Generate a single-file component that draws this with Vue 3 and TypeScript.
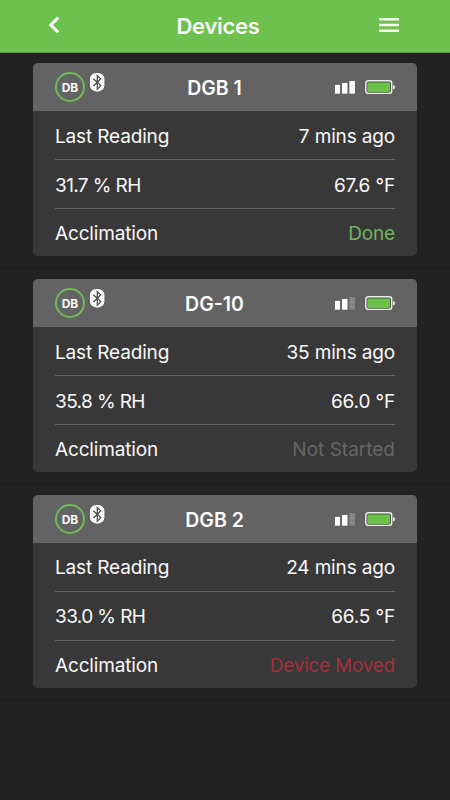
<script setup lang="ts">
interface Device {
  name: string
  reading: string
  humidity: string
  temperature: string
  status: string
  tone: 'done' | 'idle' | 'moved'
  signal: number
}

const devices: Device[] = [
  { name: 'DGB 1', reading: '7 mins ago', humidity: '31.7 % RH', temperature: '67.6 °F', status: 'Done', tone: 'done', signal: 3 },
  { name: 'DG-10', reading: '35 mins ago', humidity: '35.8 % RH', temperature: '66.0 °F', status: 'Not Started', tone: 'idle', signal: 2 },
  { name: 'DGB 2', reading: '24 mins ago', humidity: '33.0 % RH', temperature: '66.5 °F', status: 'Device Moved', tone: 'moved', signal: 2 },
]
</script>

<template>
  <div class="screen">
    <header class="topbar">
      <button class="icon-button" aria-label="Back">
        <svg width="12" height="18" viewBox="0 0 12 18"><path d="M10.2 1.6 2.8 9 10.2 16.4" fill="none" stroke="#fff" stroke-width="3" /></svg>
      </button>
      <h1>Devices</h1>
      <button class="icon-button" aria-label="Menu">
        <svg width="20" height="14" viewBox="0 0 20 14"><path d="M0 1.3h20M0 7h20M0 12.7h20" stroke="#f6fff0" stroke-width="2.5" /></svg>
      </button>
    </header>
    <main>
      <section v-for="device in devices" :key="device.name" class="slot">
        <article class="card">
          <div class="card-head">
            <div class="badges">
              <span class="ring">DB</span>
              <svg class="bluetooth" width="15" height="19" viewBox="0 0 15 19">
                <rect x="0" y="0" width="14.4" height="18.4" rx="6.2" fill="#fff" />
                <path d="M3.3 5.7 10.8 12.6 7.3 16.1V2.5L10.8 5.9 3.3 12.9" fill="none" stroke="#4d4d4d" stroke-width="1.3" />
              </svg>
            </div>
            <h2>{{ device.name }}</h2>
            <div class="indicators">
              <svg width="20" height="14" viewBox="0 0 20 14">
                <rect x="0" y="4.9" width="5" height="8.8" fill="#fafafa" />
                <rect x="7" y="3" width="5.5" height="10.7" fill="#fafafa" />
                <rect x="14.4" y="1" width="5.6" height="12.7" :fill="device.signal > 2 ? '#fafafa' : '#858585'" />
              </svg>
              <svg width="30" height="14" viewBox="0 0 30 14">
                <rect x="0.8" y="0.8" width="25.9" height="12.7" rx="2.5" fill="#4c5547" stroke="#eef0ed" stroke-width="1.4" />
                <rect x="2.3" y="2.4" width="22.8" height="9.5" rx="0.6" fill="#6cc04c" />
                <path d="M28 5q2 .3 2 2.2T28 9.4z" fill="#eee" />
              </svg>
            </div>
          </div>
          <dl class="rows">
            <div class="row"><dt>Last Reading</dt><dd>{{ device.reading }}</dd></div>
            <div class="row figures"><dt>{{ device.humidity }}</dt><dd>{{ device.temperature }}</dd></div>
            <div class="row"><dt>Acclimation</dt><dd :class="device.tone">{{ device.status }}</dd></div>
          </dl>
        </article>
      </section>
    </main>
  </div>
</template>

<style>
body {
  background: #222;
}
</style>

<style scoped>
.screen {
  width: 450px;
  height: 800px;
  overflow: hidden;
  background: #222;
  color: #f8f8f8;
  font-family: Inter, "Liberation Sans", sans-serif;
}
.topbar {
  box-sizing: border-box;
  height: 53px;
  padding: 0 48px 2px;
  display: grid;
  grid-template-columns: 32px 1fr 32px;
  align-items: center;
  background: #6ec04f;
  border-bottom: 1px solid #648c54;
}
.icon-button {
  display: flex;
  align-items: center;
  height: 50px;
  padding: 0;
  border: 0;
  background: none;
}
.icon-button:last-child {
  justify-content: flex-end;
  padding-right: 3px;
}
h1 {
  margin: 2px 0 0;
  padding-right: 14px;
  text-align: center;
  font-size: 22px;
  line-height: 28px;
  font-weight: 600;
  letter-spacing: -0.3px;
}
.slot {
  box-sizing: border-box;
  height: 216px;
  padding: 11px 33px 0;
  border-bottom: 1px solid #1a1a1a;
}
.slot:first-child {
  height: 215px;
  padding-top: 10px;
}
.card {
  height: 193px;
  border-radius: 5px;
  overflow: hidden;
  background: #383838;
}
.card-head {
  height: 48px;
  padding: 0 22px;
  display: grid;
  grid-template-columns: 70px 1fr 70px;
  align-items: center;
  background: #636363;
}
.badges {
  display: flex;
  gap: 5px;
}
.ring {
  box-sizing: border-box;
  width: 30px;
  height: 30px;
  border: 2px solid #70b957;
  border-radius: 50%;
  text-align: center;
  font-size: 12px;
  line-height: 27px;
  font-weight: 700;
}
.bluetooth {
  margin-top: 1px;
}
h2 {
  margin: 2px 0 0;
  padding-right: 21px;
  text-align: center;
  font-size: 19.5px;
  line-height: 26px;
  font-weight: 600;
  color: #fff;
}
.indicators {
  display: flex;
  align-items: center;
  justify-content: flex-end;
  gap: 10px;
}
.rows {
  margin: 0;
  padding: 0 22px;
}
.row {
  height: 48px;
  display: flex;
  align-items: center;
  justify-content: space-between;
  font-size: 19px;
  line-height: 26px;
  letter-spacing: -0.15px;
}
.row + .row {
  border-top: 1px solid #626262;
}
dt,
dd {
  margin: 3px 0 0;
}
.row:last-child dt,
.row:last-child dd,
.slot:last-child dt,
.slot:last-child dd {
  margin-top: 2px;
}
.figures dt {
  letter-spacing: -0.6px;
}
.done {
  color: #70b45b;
}
.idle {
  color: #666;
  letter-spacing: 0;
}
.moved {
  color: #a52e3b;
  letter-spacing: -0.25px;
}
</style>
